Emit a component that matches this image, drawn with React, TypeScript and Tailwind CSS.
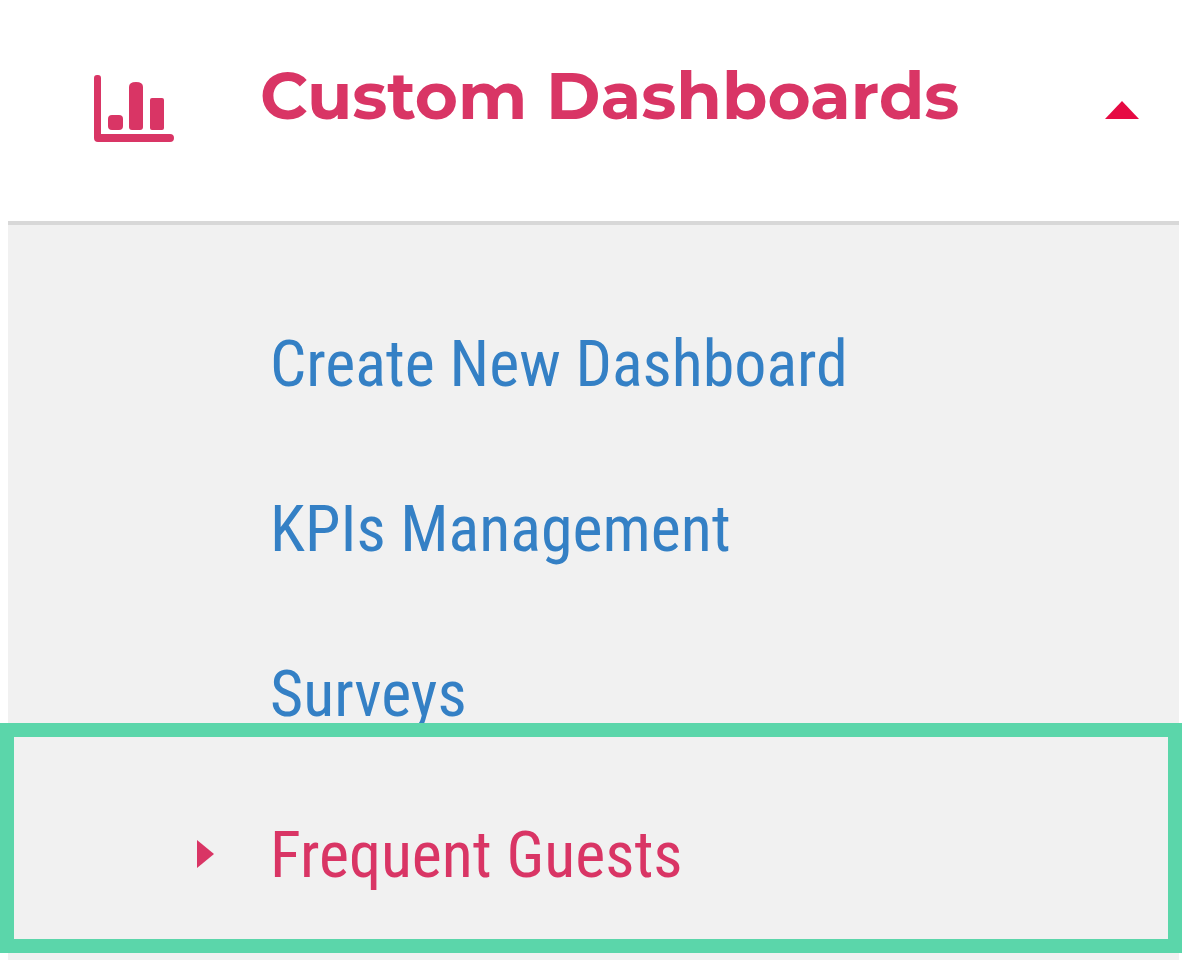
const ITEMS = [
  { label: "Create New Dashboard", href: "#create" },
  { label: "KPIs Management", href: "#kpis" },
  { label: "Surveys", href: "#surveys" },
];

const ChartIcon = () => (
  <svg viewBox="0 0 80 68" className="h-[68px] w-20" fill="#d93565">
    <path d="M0 3a3 3 0 0 1 3-3h1a3 3 0 0 1 3 3v56h69a4 4 0 0 1 0 8H4a4 4 0 0 1-4-4z" />
    <rect x="14" y="40" width="15" height="15" rx="4" />
    <path d="M35 12q0-5 7-5t7 5v40a3 3 0 0 1-3 3h-8a3 3 0 0 1-3-3z" />
    <rect x="56" y="23" width="14" height="32" rx="2" />
  </svg>
);

const App = () => {
  return (
    <nav className="flex min-h-screen flex-col bg-white font-['Roboto_Condensed','Roboto',sans-serif]">
      <button
        type="button"
        aria-expanded="true"
        className="flex h-[221px] w-full items-start pl-[94px] pr-[43px] pt-[60px] text-left"
      >
        <span className="pt-[15px]">
          <ChartIcon />
        </span>
        <span className="ml-[86px] flex-1 whitespace-nowrap font-['Montserrat','Open_Sans',sans-serif] text-[66px] font-bold leading-[72px] text-[#d93565]">
          Custom Dashboards
        </span>
        <svg viewBox="0 0 34 18" className="mt-[41px] h-[18px] w-[34px]" fill="#e60a43">
          <path d="M0 18 17 0l17 18z" />
        </svg>
      </button>
      <div className="ml-2 mr-[3px] flex-1 border-t-4 border-[#d8d8d8] bg-[#f1f1f1]">
        <ul className="pt-[57px]">
          {ITEMS.map((item) => (
            <li key={item.label} className="h-[165px] pl-[262px]">
              <a
                href={item.href}
                className="block whitespace-nowrap text-[64px] leading-[165px] text-[#3480c5]"
              >
                {item.label}
              </a>
            </li>
          ))}
          {/* the highlight frame overlaps the row above and both panel edges */}
          <li className="relative -ml-2 -mr-[3px] -mt-[54px] h-[230px] border-[14px] border-[#5bd6aa] bg-[#f1f1f1] pt-9">
            <a
              href="#guests"
              aria-current="page"
              className="flex items-center whitespace-nowrap pl-[183px] text-[64px] leading-[165px] text-[#d93565]"
            >
              <svg viewBox="0 0 17 28" className="mb-1 mr-14 h-7 w-[17px]" fill="#d93565">
                <path d="M0 0 17 14 0 28z" />
              </svg>
              Frequent Guests
            </a>
          </li>
        </ul>
      </div>
    </nav>
  );
};

export default App;
